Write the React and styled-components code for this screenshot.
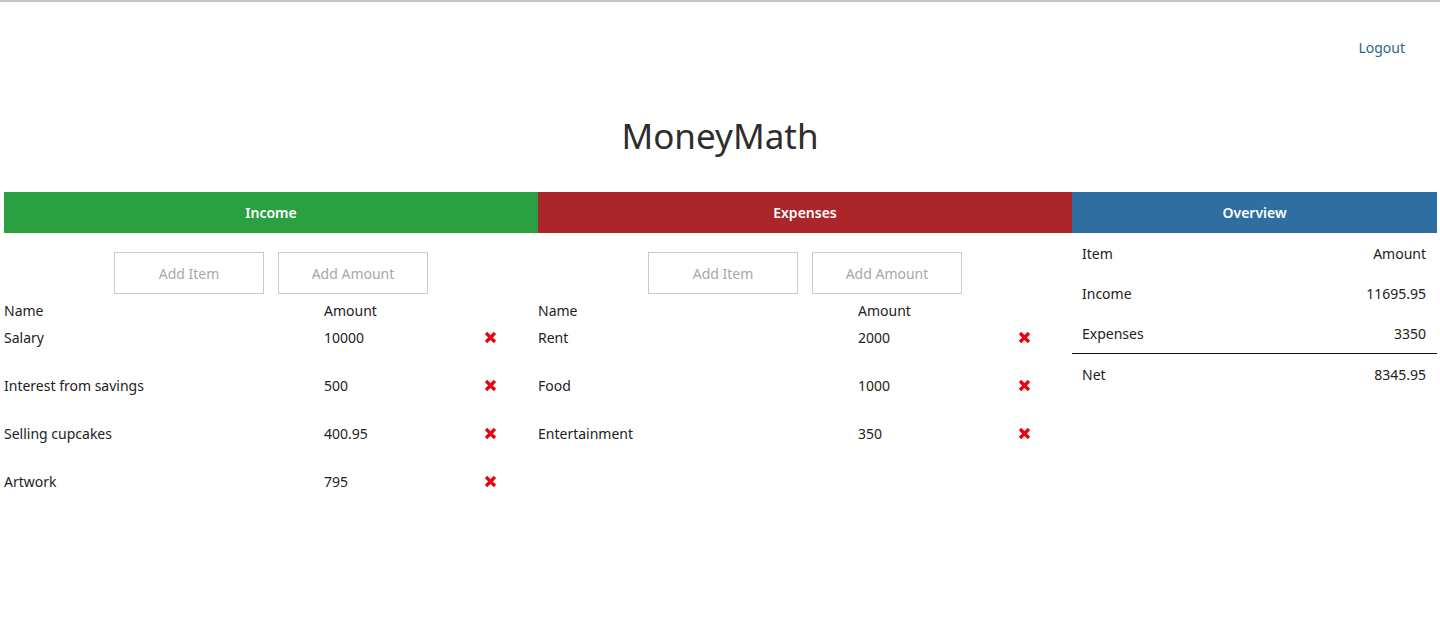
import styled, { createGlobalStyle } from 'styled-components';

const GlobalStyle = createGlobalStyle`
    body {
        margin: 0;
        font-family: 'Noto Sans', 'Open Sans', sans-serif;
        color: #222;
        background: #fff;
    }
`;

const income = [
    { name: 'Salary', amount: '10000' },
    { name: 'Interest from savings', amount: '500' },
    { name: 'Selling cupcakes', amount: '400.95' },
    { name: 'Artwork', amount: '795' },
];

const expenses = [
    { name: 'Rent', amount: '2000' },
    { name: 'Food', amount: '1000' },
    { name: 'Entertainment', amount: '350' },
];

const overview = [
    { name: 'Income', amount: '11695.95' },
    { name: 'Expenses', amount: '3350' },
];

const DeleteIcon = () => (
    <svg width='13' height='13' viewBox='0 0 13 13'>
        <path
            d='M2 2 L11 11 M11 2 L2 11'
            stroke='#f0000f'
            strokeWidth='3.2'
            strokeLinecap='butt'
        />
    </svg>
);

const ListPanel = ({ title, color, items }) => (
    <Column>
        <Header color={color}>{title}</Header>
        <Controls>
            <AddBtn>Add Item</AddBtn>
            <AddBtn>Add Amount</AddBtn>
        </Controls>
        <Row head>
            <Cell>Name</Cell>
            <Cell>Amount</Cell>
            <Cell />
        </Row>
        {items.map((item) => (
            <Row key={item.name}>
                <Cell>{item.name}</Cell>
                <Cell>{item.amount}</Cell>
                <Cell>
                    <DeleteIcon />
                </Cell>
            </Row>
        ))}
    </Column>
);

const App = () => {
    return (
        <>
            <GlobalStyle />
            <Wrapper>
                <TopBar>
                    <Logout>Logout</Logout>
                </TopBar>
                <Title>MoneyMath</Title>
                <Panels>
                    <ListPanel title='Income' color='#2aa043' items={income} />
                    <ListPanel title='Expenses' color='#ab262b' items={expenses} />
                    <Column>
                        <Header color='#2f6ea1'>Overview</Header>
                        <OverviewRow>
                            <span>Item</span>
                            <span>Amount</span>
                        </OverviewRow>
                        {overview.map((row) => (
                            <OverviewRow key={row.name}>
                                <span>{row.name}</span>
                                <span>{row.amount}</span>
                            </OverviewRow>
                        ))}
                        <OverviewRow total>
                            <span>Net</span>
                            <span>8345.95</span>
                        </OverviewRow>
                    </Column>
                </Panels>
            </Wrapper>
        </>
    );
};

export default App;

const Wrapper = styled.div`
    border-top: 2px solid #c4c4c4;
    min-height: 639px;
`;

const TopBar = styled.div`
    display: flex;
    justify-content: flex-end;
    padding: 36px 35px 0 0;
    height: 40px;
`;

const Logout = styled.a`
    font-size: 14px;
    color: #2b6886;
    cursor: pointer;
`;

const Title = styled.h1`
    margin: 0;
    text-align: center;
    font-size: 35px;
    font-weight: 400;
    color: #2d2d2d;
    padding-top: 36px;
    height: 78px;
    line-height: 44px;
`;

const Panels = styled.div`
    display: grid;
    grid-template-columns: 534px 534px 365px;
    padding-left: 4px;
`;

const Column = styled.div`
    display: flex;
    flex-direction: column;
`;

const Header = styled.div`
    background: ${(p) => p.color};
    color: #fff;
    height: 41px;
    display: flex;
    align-items: center;
    justify-content: center;
    font-size: 14px;
    font-weight: 600;
`;

const Controls = styled.div`
    display: flex;
    justify-content: center;
    gap: 14px;
    margin-top: 19px;
    margin-bottom: 6px;
`;

const AddBtn = styled.button`
    width: 150px;
    height: 42px;
    background: #fff;
    border: 1px solid #cbcbcb;
    color: #a8a8a8;
    font-family: inherit;
    font-size: 14px;
    padding: 0;
`;

const Row = styled.div`
    display: grid;
    grid-template-columns: 320px 160px 20px;
    align-items: center;
    height: 20px;
    margin-bottom: ${(p) => (p.head ? '7px' : '28px')};
    font-size: 14px;
`;

const Cell = styled.div`
    display: flex;
    align-items: center;
`;

const OverviewRow = styled.div`
    display: flex;
    justify-content: space-between;
    align-items: center;
    height: 40px;
    padding: 0 11px 0 10px;
    font-size: 14px;
    border-top: ${(p) => (p.total ? '1px solid #111' : 'none')};
`;
